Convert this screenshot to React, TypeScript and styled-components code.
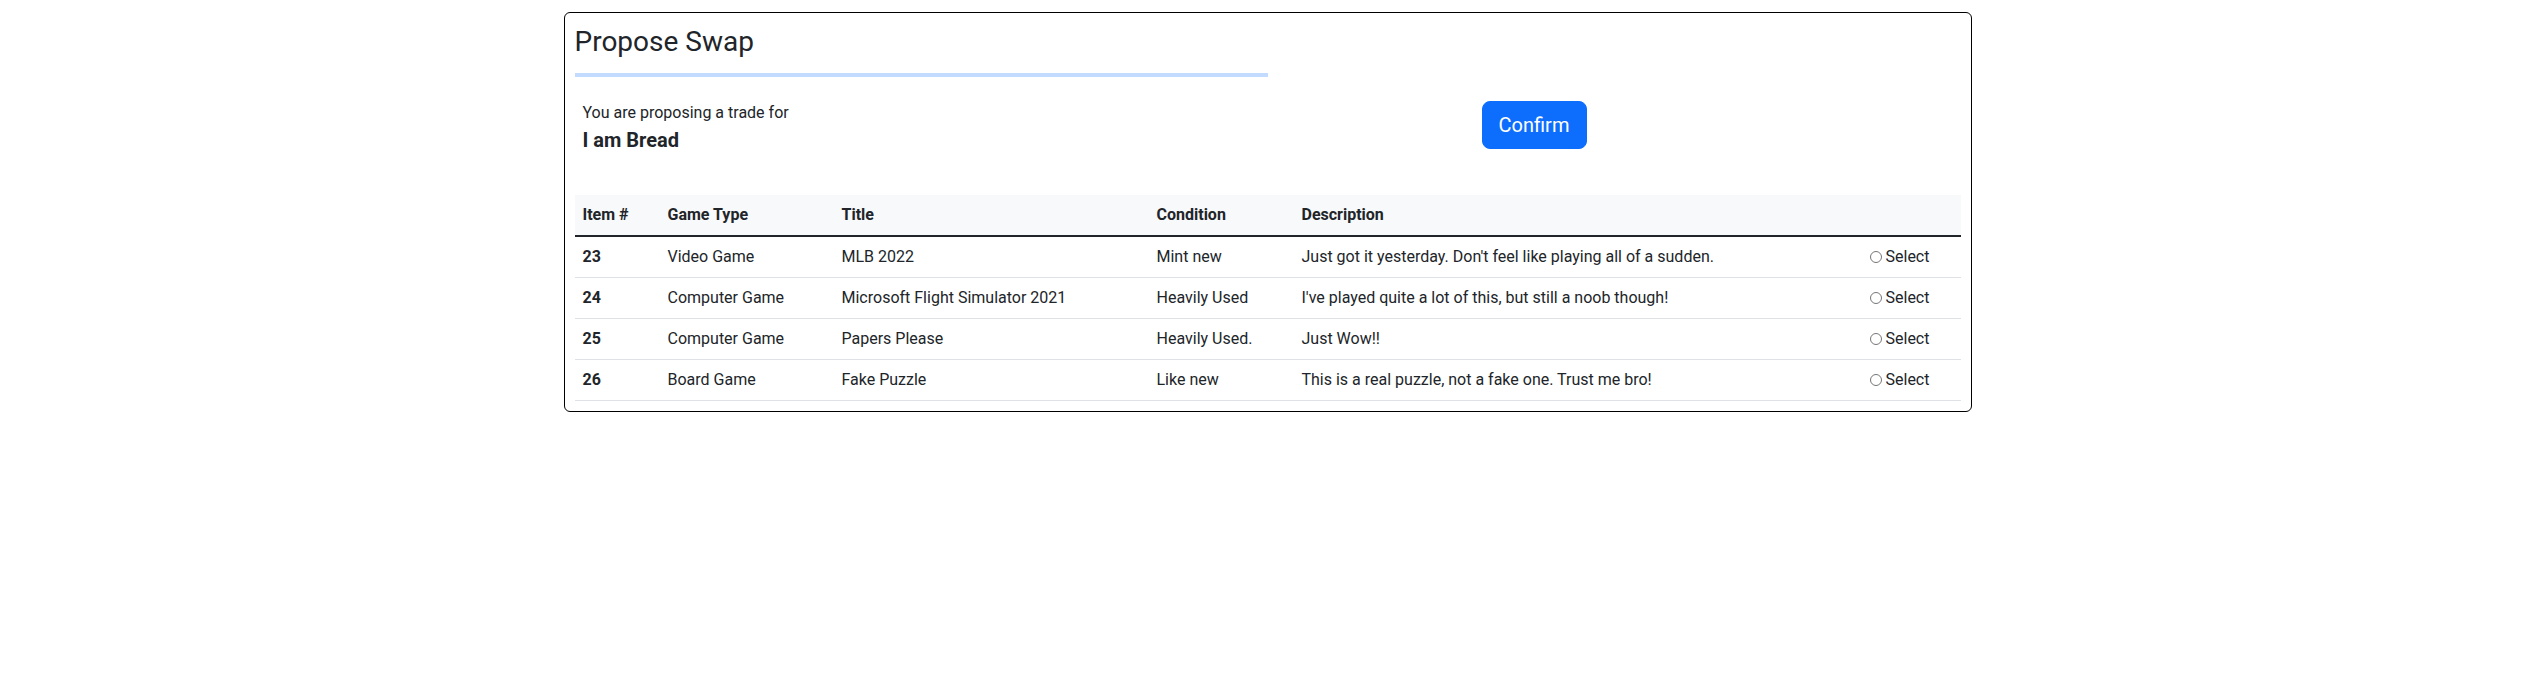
import styled, { createGlobalStyle } from 'styled-components'

const GlobalStyle = createGlobalStyle`
  body {
    margin: 0;
    font-family: Roboto, "Liberation Sans", sans-serif;
    font-size: 16px;
    line-height: 1.5;
    color: #212529;
    background: #fff;
  }
`

const Page = styled.div`
  padding-top: 12px;
`

const Card = styled.div`
  width: 1408px;
  box-sizing: border-box;
  margin: 0 auto;
  border: 1px solid #000;
  border-radius: 6px;
  padding: 12px 10px 10px;
`

const Title = styled.h3`
  margin: 0;
  font-size: 28px;
  font-weight: 400;
  line-height: 1.2;
`

const Divider = styled.hr`
  width: 693px;
  margin: 14px 0 0;
  border: 0;
  border-top: 4px solid #c3dbfe;
`

const Summary = styled.div`
  display: grid;
  grid-template-columns: 907px auto;
  align-items: start;
  margin-top: 24px;
`

const Proposal = styled.div`
  padding-left: 8px;
`

const Lead = styled.p`
  margin: 0;
`

const ItemName = styled.h5`
  margin: 3px 0 0;
  font-size: 20px;
  font-weight: 700;
  line-height: 1.2;
`

const ConfirmButton = styled.button`
  justify-self: start;
  min-width: 105px;
  height: 48px;
  padding: 8px 16px;
  font-family: inherit;
  font-size: 20px;
  line-height: 1.5;
  color: #fff;
  background: #0d6efd;
  border: 1px solid #0d6efd;
  border-radius: 8px;
  cursor: pointer;
`

const Table = styled.table`
  width: 100%;
  margin-top: 43px;
  border-collapse: collapse;
  table-layout: fixed;
`

const HeadRow = styled.tr`
  background: #f8f9fa;
  border-bottom: 2px solid #212529;
`

const HeadCell = styled.th`
  height: 24px;
  padding: 8px;
  text-align: left;
  font-weight: 700;
`

const Row = styled.tr`
  border-bottom: 1px solid #dee2e6;
`

const Cell = styled.td<{ $bold?: boolean }>`
  height: 24px;
  padding: 8px;
  font-weight: ${({ $bold }) => ($bold ? 700 : 400)};
  white-space: nowrap;
  vertical-align: middle;
`

const RadioLabel = styled.label`
  cursor: pointer;
`

const Radio = styled.input`
  width: 12px;
  height: 12px;
  margin: 0 4px 0 5px;
  vertical-align: -1px;
  accent-color: #0d6efd;
`

const columns = [
  { label: 'Item #', width: 85 },
  { label: 'Game Type', width: 174 },
  { label: 'Title', width: 315 },
  { label: 'Condition', width: 145 },
  { label: 'Description', width: 563 },
  { label: '', width: 104 },
]

const items = [
  {
    id: 23,
    type: 'Video Game',
    title: 'MLB 2022',
    condition: 'Mint new',
    description: "Just got it yesterday. Don't feel like playing all of a sudden.",
  },
  {
    id: 24,
    type: 'Computer Game',
    title: 'Microsoft Flight Simulator 2021',
    condition: 'Heavily Used',
    description: "I've played quite a lot of this, but still a noob though!",
  },
  {
    id: 25,
    type: 'Computer Game',
    title: 'Papers Please',
    condition: 'Heavily Used.',
    description: 'Just Wow!!',
  },
  {
    id: 26,
    type: 'Board Game',
    title: 'Fake Puzzle',
    condition: 'Like new',
    description: 'This is a real puzzle, not a fake one. Trust me bro!',
  },
]

const App = () => {
  return (
    <Page>
      <GlobalStyle />
      <Card>
        <Title>Propose Swap</Title>
        <Divider />

        <Summary>
          <Proposal>
            <Lead>You are proposing a trade for</Lead>
            <ItemName>I am Bread</ItemName>
          </Proposal>
          <ConfirmButton type="button">Confirm</ConfirmButton>
        </Summary>

        <Table>
          <colgroup>
            {columns.map((col, index) => (
              <col key={index} style={{ width: col.width }} />
            ))}
          </colgroup>
          <thead>
            <HeadRow>
              {columns.map((col, index) => (
                <HeadCell key={index}>{col.label}</HeadCell>
              ))}
            </HeadRow>
          </thead>
          <tbody>
            {items.map(item => (
              <Row key={item.id}>
                <Cell $bold>{item.id}</Cell>
                <Cell>{item.type}</Cell>
                <Cell>{item.title}</Cell>
                <Cell>{item.condition}</Cell>
                <Cell>{item.description}</Cell>
                <Cell>
                  <RadioLabel>
                    <Radio type="radio" name="swap-item" value={item.id} />
                    Select
                  </RadioLabel>
                </Cell>
              </Row>
            ))}
          </tbody>
        </Table>
      </Card>
    </Page>
  )
}

export default App
